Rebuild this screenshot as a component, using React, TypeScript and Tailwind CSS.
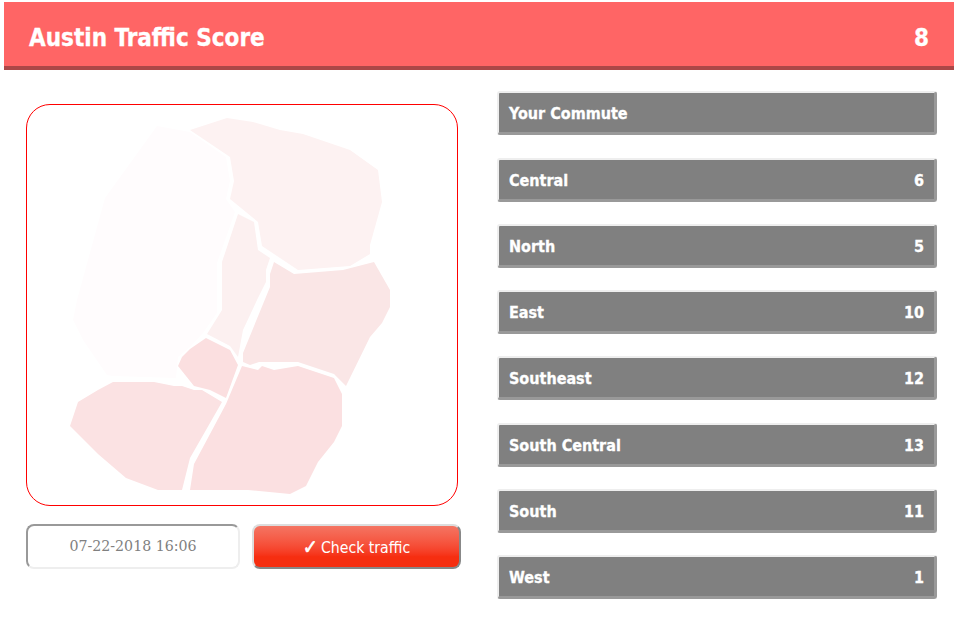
const regions = [
  { fill: "#fffcfd", pts: "157,126 190,132 226,157 230,181 226,199 235,212 217,263 217,313 203,333 190,347 178,357 176,378 113,376 107,375 83,340 73,320 77,300 105,198" },
  { fill: "#fdf2f2", pts: "190,130 227,118 253,122 280,130 303,134 350,150 378,170 382,202 370,245 370,254 350,266 298,270 262,246 258,222 230,199 234,181 230,157" },
  { fill: "#fcf0f0", pts: "238,214 254,222 258,250 270,258 266,270 266,282 257,300 243,330 238,357 230,346 207,334 222,310 222,262" },
  { fill: "#fae6e6", pts: "274,262 294,274 343,270 374,262 390,290 390,307 382,323 370,337 346,386 334,374 298,362 259,362 250,365 243,362 243,353 270,287 270,274" },
  { fill: "#fbdfe0", pts: "206,338 230,350 238,365 226,398 210,390 194,386 178,366 182,357 190,349" },
  { fill: "#fbe0e1", pts: "242,366 258,370 262,366 274,370 298,366 334,378 342,394 342,426 334,442 318,462 306,486 290,494 248,490 190,490 194,464 226,404" },
  { fill: "#fbe2e3", pts: "113,382 154,382 174,386 182,386 194,390 202,390 222,402 190,458 182,490 158,490 126,478 98,454 70,426 78,402 98,390" },
];

const rows: [string, string][] = [
  ["Your Commute", ""],
  ["Central", "6"],
  ["North", "5"],
  ["East", "10"],
  ["Southeast", "12"],
  ["South Central", "13"],
  ["South", "11"],
  ["West", "1"],
];

export default function App() {
  return (
    <div className="h-[631px] w-[958px] overflow-hidden bg-white pt-[2px] font-['DejaVu_Sans_Condensed','DejaVu_Sans',sans-serif]">
      <header className="mx-[4px] flex h-[68px] items-center justify-between border-b-4 border-[#ab4747] bg-[#ff6565] px-[25px] pt-[7px] text-[24px] font-bold text-white [-webkit-text-stroke:0.3px_white]">
        <span>Austin Traffic Score</span>
        <span>8</span>
      </header>
      <main className="flex pl-[26px] pt-[21.3px]">
        <section className="mt-[12.7px] w-[435px]">
          <div className="h-[402px] w-[432px] overflow-hidden rounded-[24px] border border-[#ff0000] bg-white">
            <svg width="432" height="402" viewBox="27 105 432 402">
              {regions.map((r, i) => (
                <polygon key={i} points={r.pts} fill={r.fill} />
              ))}
            </svg>
          </div>
          <div className="mt-[18px] flex gap-[12px]">
            <div className="flex h-[45px] w-[214px] items-center justify-center rounded-[8px] border-2 border-b-[#eeeeee] border-l-[#999999] border-r-[#eeeeee] border-t-[#999999] bg-white font-['DejaVu_Serif',serif] text-[14.2px] text-[#808080]">
              07-22-2018 16:06
            </div>
            <button className="flex h-[45px] w-[209px] items-center justify-center rounded-[8px] border-2 border-b-[#888888] border-l-[#dddddd] border-r-[#888888] border-t-[#dddddd] bg-linear-to-b from-[#f47462] to-[#f62e10] to-75% pt-[2px] text-[15.7px] text-white">
              <span className="text-[20px] font-bold leading-none [-webkit-text-stroke:0.6px_white]">✓</span>
              <span className="ml-[3px]">Check traffic</span>
            </button>
          </div>
        </section>
        <section className="ml-[36px] flex w-[440px] flex-col gap-[22.3px]">
          {rows.map(([name, value]) => (
            <div
              key={name}
              className="flex h-[44px] items-center justify-between rounded-[3px] border-[2px] border-b-[3px] border-r-[3px] border-b-[#999999] border-l-[#eeeeee] border-r-[#999999] border-t-[#eeeeee] bg-[#808080] pl-[10px] pr-[10px] pt-[3px] text-[16px] font-bold text-white [-webkit-text-stroke:0.3px_white]"
            >
              <span>{name}</span>
              <span>{value}</span>
            </div>
          ))}
        </section>
      </main>
    </div>
  );
}
